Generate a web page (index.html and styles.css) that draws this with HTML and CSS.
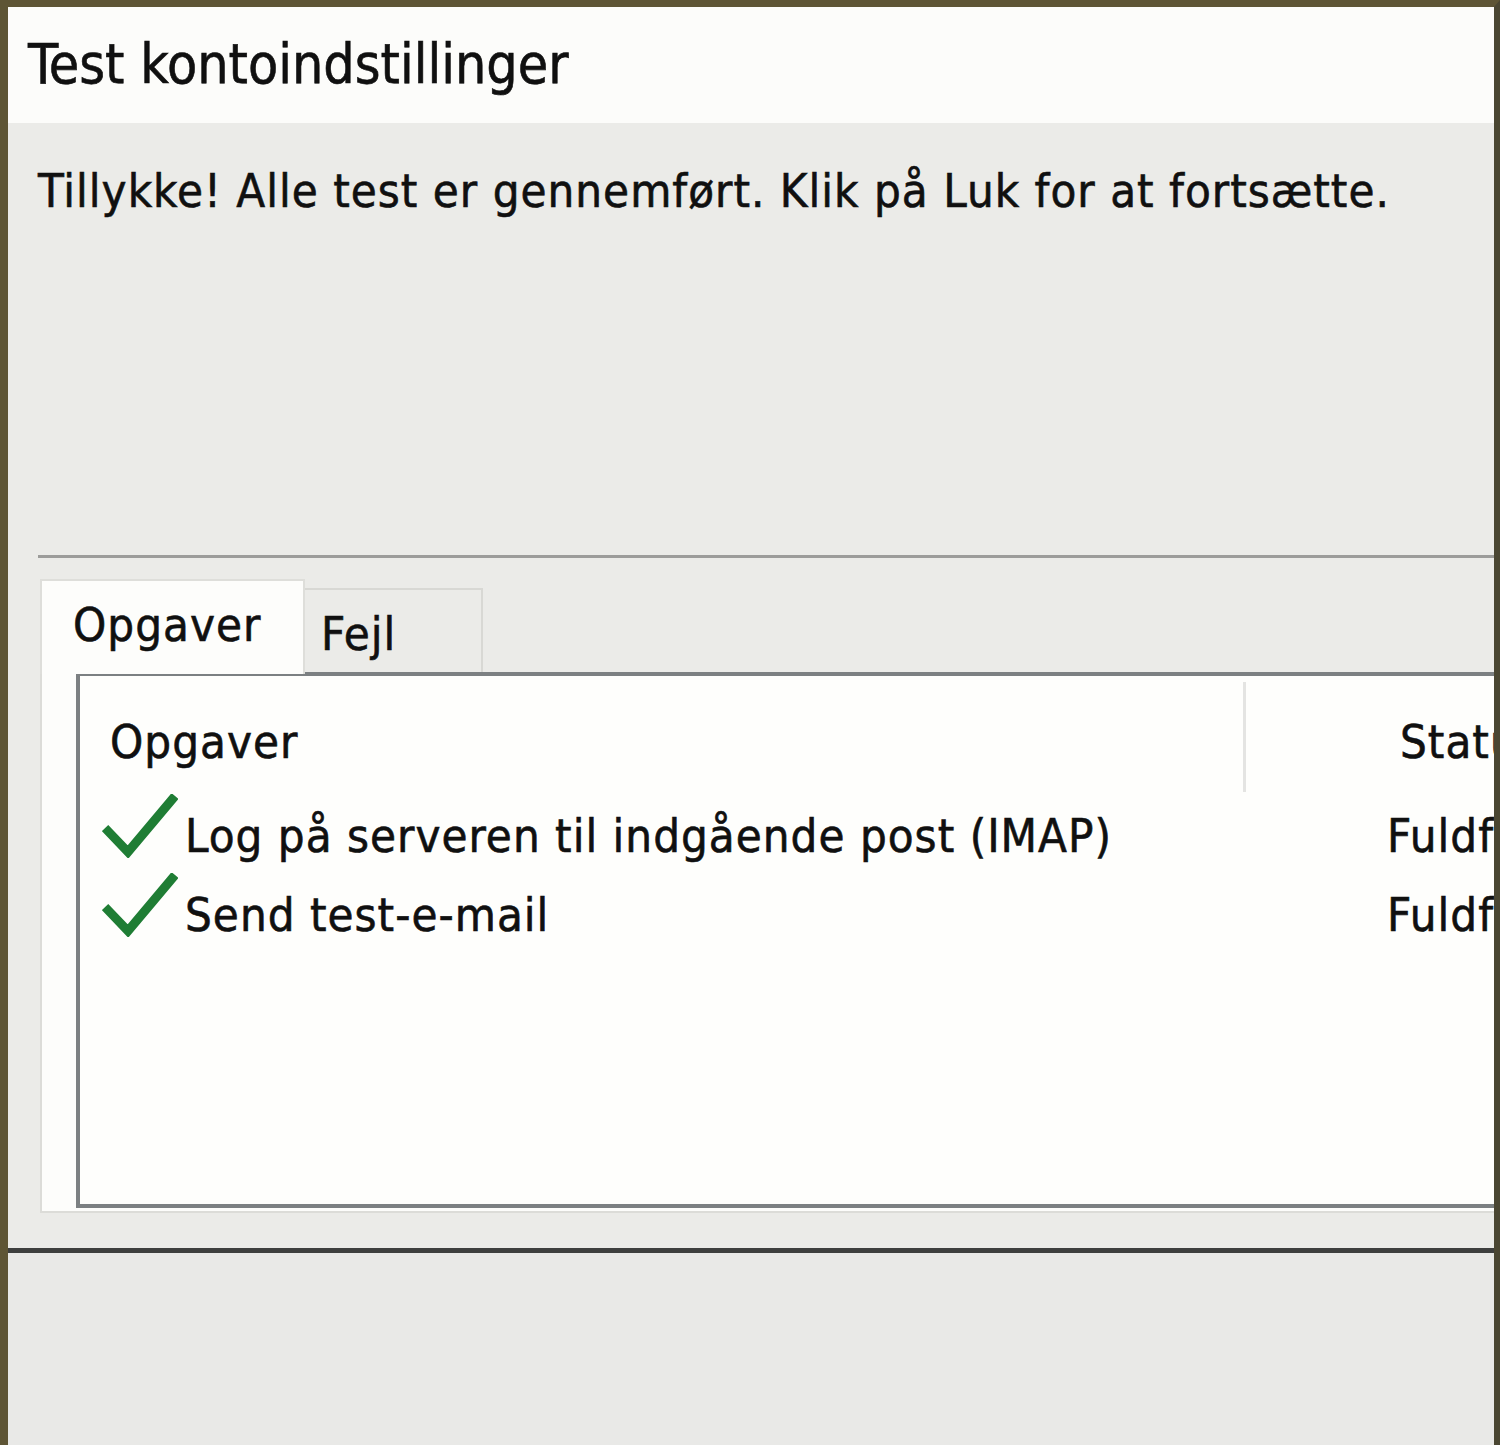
FILE: index.html
```html
<!DOCTYPE html>
<html>
<head>
<meta charset="utf-8">
<link rel="stylesheet" href="styles.css">
</head>
<body>
<div class="window">
  <div class="header"><span class="title">Test kontoindstillinger</span></div>
  <div class="body">
    <p class="message">Tillykke! Alle test er gennemført. Klik på Luk for at fortsætte.</p>
    <div class="separator"></div>
    <div class="tabs">
      <div class="tab active">Opgaver</div>
      <div class="tab">Fejl</div>
    </div>
    <div class="tabpage">
      <div class="listview">
        <div class="colheader">
          <div class="col-task">Opgaver</div>
          <div class="col-divider"></div>
          <div class="col-status">Status</div>
        </div>
        <div class="row">
          <svg class="check" viewBox="0 0 76 64"><path d="M3 34 L26 58 L73 2" fill="none" stroke="#1f7d34" stroke-width="9" stroke-linejoin="miter"/></svg>
          <span class="task">Log på serveren til indgående post (IMAP)</span>
          <span class="status">Fuldført</span>
        </div>
        <div class="row">
          <svg class="check" viewBox="0 0 76 64"><path d="M3 34 L26 58 L73 2" fill="none" stroke="#1f7d34" stroke-width="9" stroke-linejoin="miter"/></svg>
          <span class="task">Send test-e-mail</span>
          <span class="status">Fuldført</span>
        </div>
      </div>
    </div>
  </div>
  <div class="footer"></div>
</div>
</body>
</html>
```

FILE: styles.css
```css
html, body {
  margin: 0;
  padding: 0;
  width: 1500px;
  height: 1445px;
  overflow: hidden;
}
body {
  font-family: "DejaVu Sans Condensed", "DejaVu Sans", sans-serif;
  color: #101010;
  background: #ebebe8;
  -webkit-text-stroke: 0.6px #101010;
}
.window {
  box-sizing: border-box;
  width: 1500px;
  height: 1445px;
  border-left: 8px solid #5e5535;
  border-top: 7px solid #5e5535;
  border-right: 6px solid #4a4632;
  display: flex;
  flex-direction: column;
  background: #ebebe8;
}
.header {
  height: 116px;
  background: #fcfcfa;
  box-sizing: border-box;
  padding: 27px 0 0 20px;
  flex-shrink: 0;
}
.title {
  font-size: 55px;
  line-height: 60px;
  white-space: nowrap;
}
.body {
  flex: 0 0 auto;
  height: 1125px;
  box-sizing: border-box;
  padding: 0 0 0 30px;
  display: flex;
  flex-direction: column;
  overflow: hidden;
}
.message {
  margin: 38px 0 0 0;
  font-size: 47px;
  line-height: 60px;
  letter-spacing: 1px;
  white-space: nowrap;
}
.separator {
  margin-top: 334px;
  height: 3px;
  background: #9c9c9a;
  flex-shrink: 0;
}
.tabs {
  display: flex;
  align-items: flex-end;
  margin-top: 21px;
  padding-left: 2px;
  height: 93px;
  flex-shrink: 0;
}
.tab {
  box-sizing: border-box;
  font-size: 47px;
  letter-spacing: 1px;
  white-space: nowrap;
}
.tab.active {
  width: 265px;
  height: 95px;
  background: #fdfdfb;
  padding: 16px 0 0 31px;
  border: 2px solid #dededa;
  border-bottom: none;
  position: relative;
  z-index: 1;
  margin-bottom: -2px;
}
.tab:not(.active) {
  width: 178px;
  height: 84px;
  background: #ebebe8;
  border: 2px solid #d8d8d4;
  border-bottom: none;
  border-left: none;
  padding: 16px 0 0 16px;
}
.tabpage {
  margin-left: 2px;
  height: 541px;
  box-sizing: border-box;
  background: #fdfdfb;
  border-left: 2px solid #dcdcd8;
  border-bottom: 2px solid #dcdcd8;
  padding: 0 0 0 34px;
  flex-shrink: 0;
}
.listview {
  height: 536px;
  box-sizing: border-box;
  border: 4px solid #7c8082;
  border-right: none;
  background: #fefefc;
  overflow: hidden;
  padding-left: 22px;
}
.colheader {
  display: flex;
  align-items: flex-start;
  height: 118px;
  font-size: 47px;
  letter-spacing: 1px;
  white-space: nowrap;
}
.col-task {
  width: 1141px;
  padding: 38px 0 0 8px;
  box-sizing: border-box;
  flex-shrink: 0;
}
.col-divider {
  margin-top: 6px;
  width: 3px;
  height: 110px;
  background: #e4e4e2;
  flex-shrink: 0;
}
.col-status {
  padding: 38px 0 0 154px;
  flex-shrink: 0;
}
.row {
  display: flex;
  align-items: flex-start;
  height: 79px;
  font-size: 47px;
  letter-spacing: 1px;
  white-space: nowrap;
}
.check {
  width: 76px;
  height: 64px;
  margin: 0 7px 0 0;
  flex-shrink: 0;
}
.task {
  width: 1202px;
  padding-top: 14px;
  flex-shrink: 0;
}
.status {
  padding-top: 14px;
  flex-shrink: 0;
}
.footer {
  flex: 1;
  border-top: 5px solid #3e3f3e;
  background: #e9e9e7;
}
```
